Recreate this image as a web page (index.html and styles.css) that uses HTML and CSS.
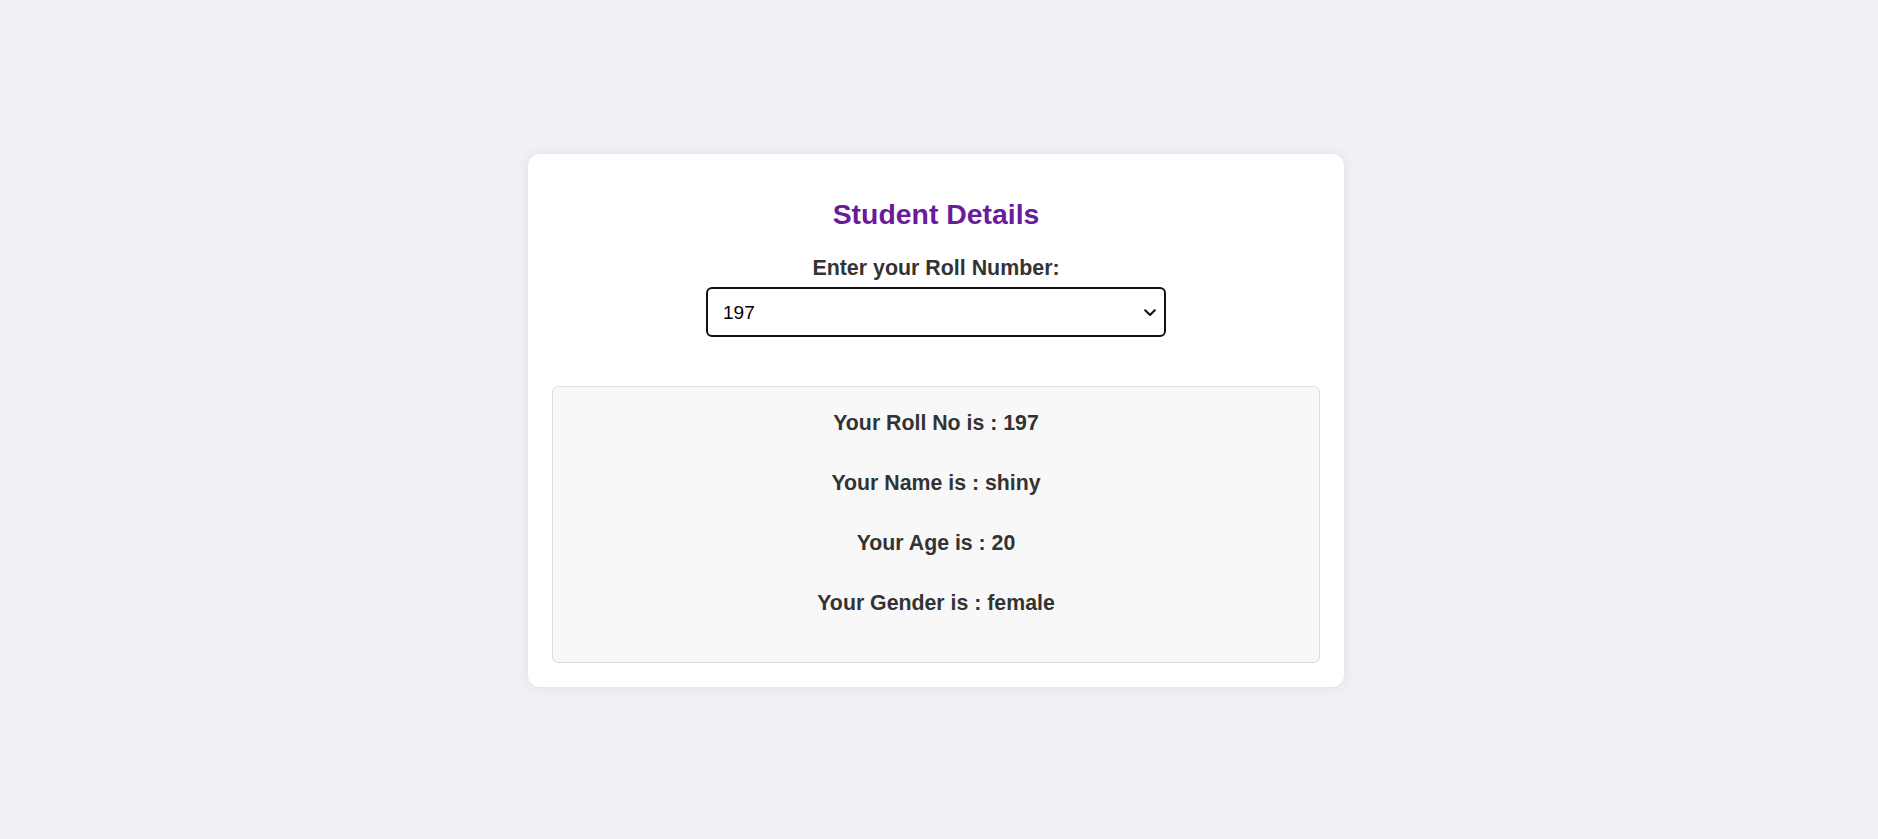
FILE: index.html
```html
<!DOCTYPE html>
<html lang="en">
<head>
<meta charset="utf-8">
<title>Student Details</title>
<link rel="stylesheet" href="styles.css">
</head>
<body>
<main class="page">
  <section class="card">
    <h2 class="title">Student Details</h2>
    <label class="label" for="roll">Enter your Roll Number:</label>
    <div class="select-wrap">
      <select id="roll" class="select">
        <option>197</option>
      </select>
      <svg class="chevron" width="12" height="8" viewBox="0 0 12 8" aria-hidden="true">
        <path d="M1.2 1.3 L6 6 L10.8 1.3" fill="none" stroke="#111" stroke-width="2.1" stroke-linecap="round" stroke-linejoin="round"/>
      </svg>
    </div>
    <div class="result">
      <p class="line">Your Roll No is : 197</p>
      <p class="line">Your Name is : shiny</p>
      <p class="line">Your Age is : 20</p>
      <p class="line">Your Gender is : female</p>
    </div>
  </section>
</main>
</body>
</html>
```

FILE: styles.css
```css
html, body {
  margin: 0;
  padding: 0;
}

body {
  background: #f0f0f5;
  font-family: "Liberation Sans", Arial, sans-serif;
  color: #333;
}

.page {
  min-height: 839px;
  display: flex;
  justify-content: center;
  align-items: flex-start;
  padding: 154px 6px 0 0;
  box-sizing: border-box;
}

.card {
  width: 816px;
  box-sizing: border-box;
  background: #fff;
  border-radius: 12px;
  box-shadow: 0 0 12px rgba(0, 0, 0, 0.08);
  padding: 24px;
  display: flex;
  flex-direction: column;
  align-items: center;
}

.title {
  margin: 20px 0 0;
  font-size: 28.4px;
  line-height: 33px;
  font-weight: 700;
  color: #6a1b9a;
}

.label {
  margin-top: 25px;
  font-size: 21.4px;
  line-height: 25px;
  font-weight: 700;
  color: #333;
}

.select-wrap {
  position: relative;
  margin-top: 6px;
  width: 460px;
  height: 50px;
}

.select {
  appearance: none;
  -webkit-appearance: none;
  width: 100%;
  height: 100%;
  box-sizing: border-box;
  border: 2px solid #111;
  border-radius: 6px;
  background: #fff;
  padding: 0 40px 0 15px;
  font-family: "Liberation Sans", Arial, sans-serif;
  font-size: 19px;
  color: #000;
  outline: none;
}

.chevron {
  position: absolute;
  right: 10px;
  top: 22px;
  pointer-events: none;
}

.result {
  align-self: stretch;
  margin-top: 49px;
  background: #f8f8f8;
  border: 1px solid #ddd;
  border-radius: 6px;
  padding: 24px 0 46px;
  display: flex;
  flex-direction: column;
  align-items: center;
  gap: 35px;
}

.line {
  margin: 0;
  font-size: 21.3px;
  line-height: 25px;
  font-weight: 700;
  color: #333;
}
```
